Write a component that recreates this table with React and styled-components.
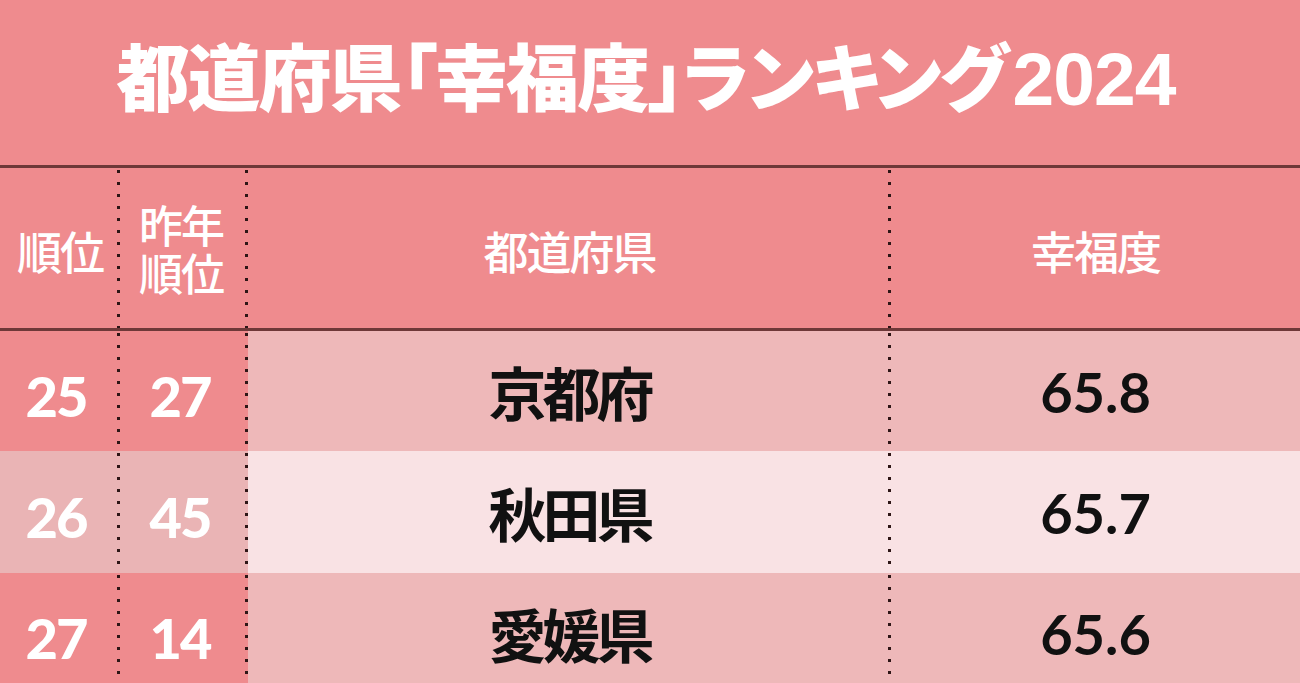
import React from 'react'
import styled, { createGlobalStyle } from 'styled-components'

const GlobalStyle = createGlobalStyle`
  html, body {
    margin: 0;
    padding: 0;
    background: #ef8b8e;
  }
  * { box-sizing: border-box; }
`

const PINK = '#ef8b8e'
const ROW_PINK = '#eeb8b9'
const ROW_PALE = '#f9e2e4'
const RANK_PALE = '#eab4b5'
const DOT = '#2e1616'

const rows = [
  { rank: 25, last: 27, pref: '京都府', score: '65.8', rankBg: PINK, bg: ROW_PINK, h: 120 },
  { rank: 26, last: 45, pref: '秋田県', score: '65.7', rankBg: RANK_PALE, bg: ROW_PALE, h: 122 },
  { rank: 27, last: 14, pref: '愛媛県', score: '65.6', rankBg: PINK, bg: ROW_PINK, h: 120 },
]

export default function App() {
  return (
    <Page>
      <GlobalStyle />
      <TitleBar>
        <Title>
          都道府県「幸福度」ランキング<Year>2024</Year>
        </Title>
      </TitleBar>
      <Rule />
      <Table>
        <Cell $bg={PINK} $dots $h={160}>
          <HeadText>順位</HeadText>
        </Cell>
        <Cell $bg={PINK} $dots $h={160}>
          <HeadStack>
            <HeadLine>昨年</HeadLine>
            <HeadLine>順位</HeadLine>
          </HeadStack>
        </Cell>
        <Cell $bg={PINK} $dots $h={160}>
          <HeadText>都道府県</HeadText>
        </Cell>
        <Cell $bg={PINK} $h={160}>
          <HeadText>幸福度</HeadText>
        </Cell>
      </Table>
      <Rule />
      {rows.map((r) => (
        <Table key={r.rank}>
          <Cell $bg={r.rankBg} $dots $h={r.h}>
            <RankNum>{r.rank}</RankNum>
          </Cell>
          <Cell $bg={r.rankBg} $dots $h={r.h}>
            <RankNum>{r.last}</RankNum>
          </Cell>
          <Cell $bg={r.bg} $dots $h={r.h}>
            <PrefName>{r.pref}</PrefName>
          </Cell>
          <Cell $bg={r.bg} $h={r.h}>
            <Score>{r.score}</Score>
          </Cell>
        </Table>
      ))}
    </Page>
  )
}

const Page = styled.div`
  width: 1300px;
  height: 683px;
  overflow: hidden;
  background: ${PINK};
  font-family: "Noto Sans CJK JP", "Noto Sans", sans-serif;
`

const TitleBar = styled.header`
  height: 165px;
  display: flex;
  align-items: center;
  justify-content: center;
  padding-bottom: 12px;
  padding-right: 8px;
`

const Title = styled.h1`
  margin: 0;
  color: #fff;
  font-size: 73px;
  font-weight: 900;
  font-feature-settings: "palt";
  letter-spacing: -2px;
  line-height: 1;
  white-space: nowrap;
`

const Year = styled.span`
  font-family: "Liberation Sans", Arial, sans-serif;
  font-weight: 700;
  font-size: 75px;
  letter-spacing: -1px;
  margin-left: 6px;
`

const Rule = styled.div`
  height: 3px;
  background: #6e3838;
  box-shadow: 0 1px 0 rgba(255, 255, 255, 0.25);
`

const Table = styled.div`
  display: grid;
  grid-template-columns: 120px 128px 643px 1fr;
`

const Cell = styled.div`
  height: ${(p) => p.$h}px;
  display: flex;
  align-items: center;
  justify-content: center;
  background: ${(p) =>
    p.$dots
      ? `linear-gradient(${DOT} 3px, transparent 3px) right 0 top 2px / 3px 12px repeat-y, ${p.$bg}`
      : p.$bg};
`

const HeadText = styled.div`
  color: #fff;
  font-size: 45px;
  font-weight: 500;
  letter-spacing: -2px;
  line-height: 1.1;
  text-align: center;
  margin-top: 6px;
`

const HeadStack = styled.div`
  display: flex;
  flex-direction: column;
  align-items: center;
  margin-right: 6px;
`

const HeadLine = styled.div`
  color: #fff;
  font-size: 44px;
  font-weight: 500;
  letter-spacing: -2px;
  height: 48px;
  line-height: 48px;
  overflow: visible;
`

const RankNum = styled.div`
  color: #fff;
  font-family: Lato, "Noto Sans", sans-serif;
  font-weight: 900;
  font-size: 56px;
  letter-spacing: -2px;
  line-height: 1;
  margin-top: 10px;
  margin-right: 8px;
`

const PrefName = styled.div`
  color: #111;
  font-size: 58px;
  font-weight: 700;
  letter-spacing: -4px;
  line-height: 1;
`

const Score = styled.div`
  color: #111;
  font-family: Lato, "Noto Sans", sans-serif;
  font-weight: 700;
  font-size: 56px;
  line-height: 1;
  margin-top: 2px;
`
